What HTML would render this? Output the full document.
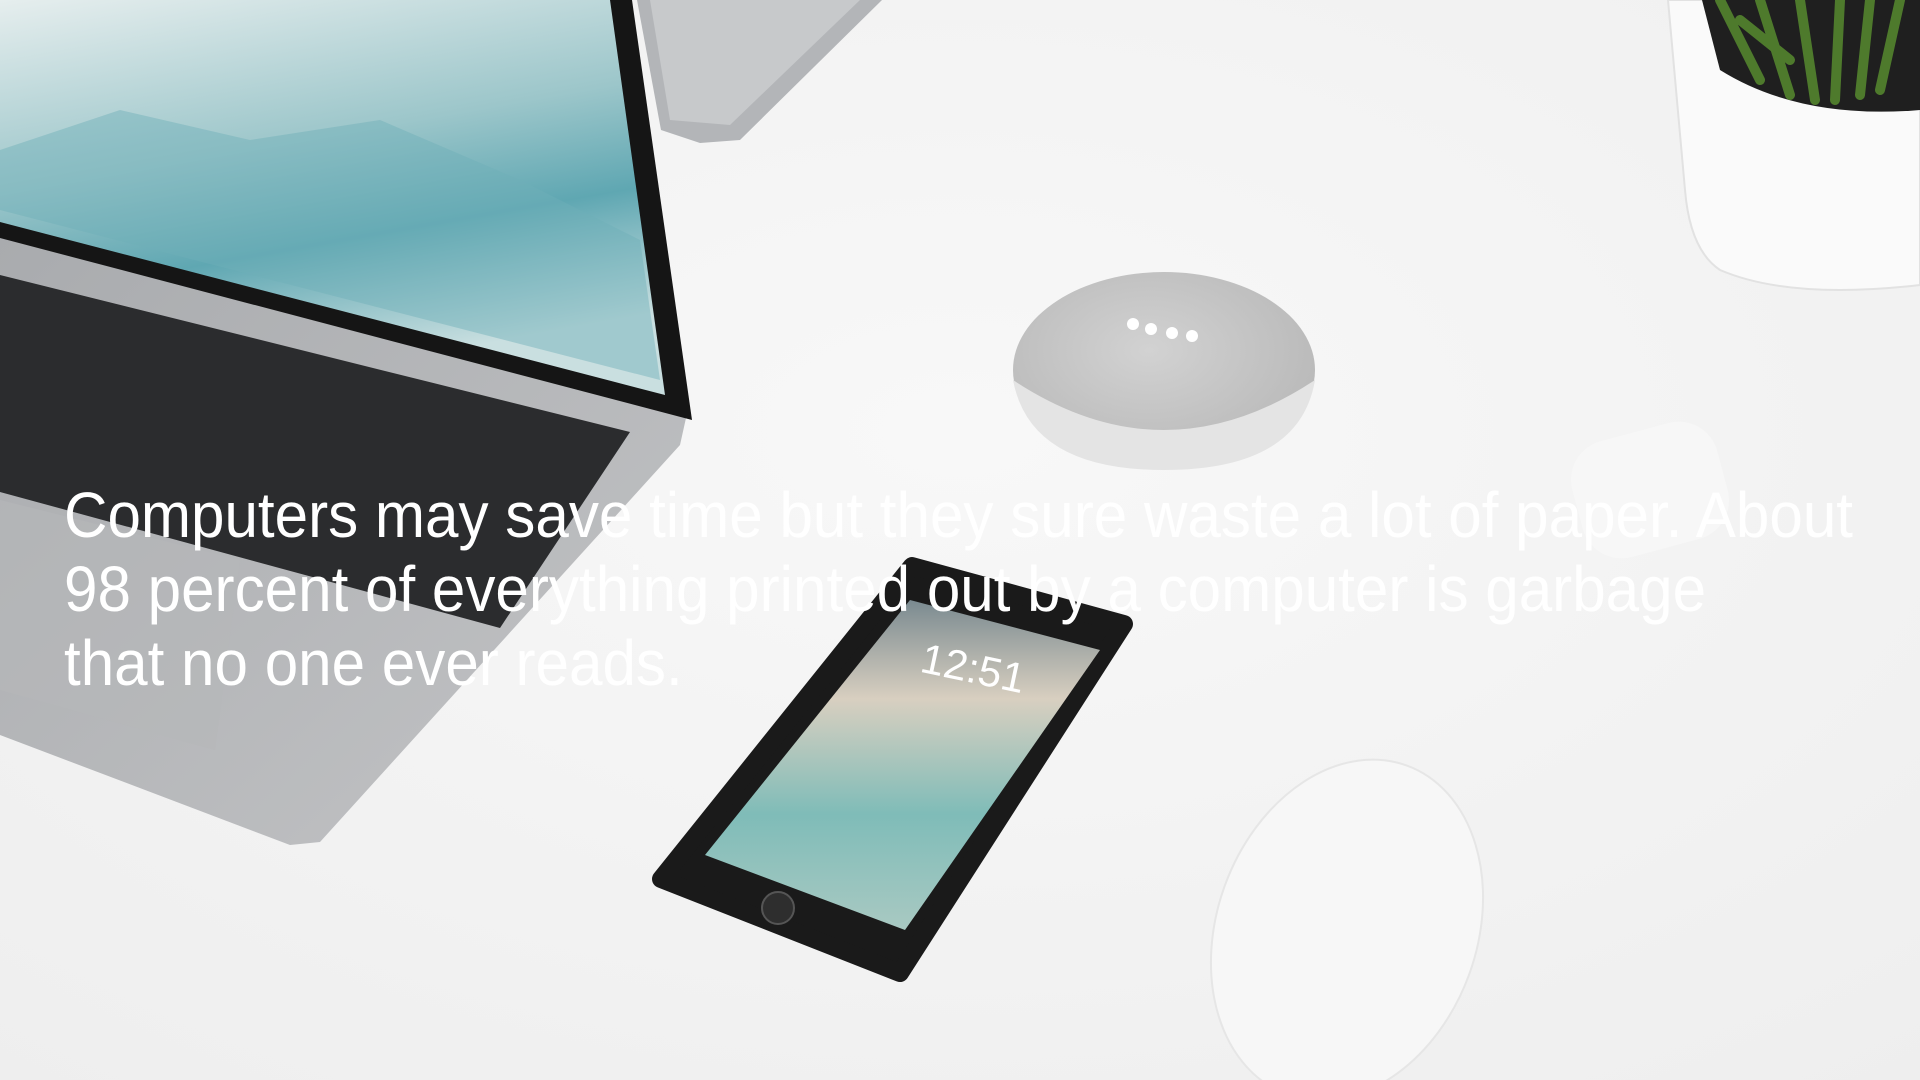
<!DOCTYPE html>
<html><head><meta charset="utf-8"><style>
html,body{margin:0;padding:0;width:1920px;height:1080px;overflow:hidden;background:#f3f3f3;}
svg{position:absolute;left:0;top:0}
.t{position:absolute;left:64px;top:478px;color:#fff;font-family:"Liberation Sans","DejaVu Sans",sans-serif;font-size:64px;line-height:74px;white-space:nowrap;transform:scaleX(0.94);transform-origin:left top;}
</style></head><body>
<svg width="1920" height="1080" viewBox="0 0 1920 1080">
<defs>
<radialGradient id="bg" cx="0.5" cy="0.4" r="0.8"><stop offset="0" stop-color="#f8f8f8"/><stop offset="1" stop-color="#eeeeee"/></radialGradient>
<linearGradient id="scr" x1="0" y1="0" x2="0.3" y2="1"><stop offset="0" stop-color="#e6eeee"/><stop offset="0.45" stop-color="#9cc6ca"/><stop offset="0.7" stop-color="#5fa7b2"/><stop offset="1" stop-color="#c9dfe0"/></linearGradient>
<linearGradient id="base" x1="0" y1="0" x2="1" y2="1"><stop offset="0" stop-color="#a9abae"/><stop offset="1" stop-color="#c3c4c6"/></linearGradient>
<linearGradient id="ph" x1="0" y1="0" x2="0" y2="1"><stop offset="0" stop-color="#7a8a90"/><stop offset="0.3" stop-color="#d8cfc0"/><stop offset="0.65" stop-color="#7fbcb8"/><stop offset="1" stop-color="#a9c9c2"/></linearGradient>
<radialGradient id="hm" cx="0.45" cy="0.4" r="0.6"><stop offset="0" stop-color="#d2d2d2"/><stop offset="1" stop-color="#b9b9b9"/></radialGradient>
</defs>
<rect width="1920" height="1080" fill="url(#bg)"/>
<polygon points="637,0 882,0 740,140 700,143 661,130" fill="#b3b5b8"/>
<polygon points="650,0 860,0 730,125 670,120" fill="#c7c9cb"/>
<polygon points="0,235 686,418 680,445 320,842 290,845 0,735" fill="url(#base)"/>
<polygon points="0,275 630,432 500,628 0,492" fill="#2b2c2e"/>
<polygon points="0,500 240,560 215,750 0,690" fill="#b6b7b9" opacity="0.6"/>
<polygon points="0,0 632,0 692,420 0,238" fill="#151515"/>
<polygon points="0,0 610,0 665,395 0,222" fill="url(#scr)"/>
<polygon points="0,150 120,110 250,140 380,120 520,180 640,240 660,380 0,210" fill="#6fb0b8" opacity="0.45"/>
<ellipse cx="1164" cy="370" rx="151" ry="98" fill="url(#hm)"/>
<path d="M1013 380 Q1164 480 1315 380 Q1300 470 1164 470 Q1030 470 1013 380Z" fill="#e4e4e4"/>
<circle cx="1133" cy="324" r="6" fill="#fff"/><circle cx="1151" cy="329" r="6" fill="#fff"/><circle cx="1172" cy="333" r="6" fill="#fff"/><circle cx="1192" cy="336" r="6" fill="#fff"/>
<path d="M1668 0 L1920 0 L1920 285 Q1790 300 1720 270 Q1690 250 1685 190 Z" fill="#fafafa" stroke="#e2e2e2" stroke-width="2"/>
<path d="M1702 0 L1920 0 L1920 110 Q1800 120 1720 70 Z" fill="#1f1f1f"/>
<path d="M1720 0 L1760 80 M1760 0 L1790 95 M1800 0 L1815 100 M1840 0 L1835 100 M1870 0 L1860 95 M1900 0 L1880 90 M1740 20 L1790 60" stroke="#4e7a2c" stroke-width="10" stroke-linecap="round"/>
<rect x="1575" y="430" width="150" height="120" rx="40" fill="#f7f7f7" transform="rotate(-15 1650 490)"/>
<polygon points="912,566 1124,624 900,973 661,879" fill="#1a1a1a" stroke="#1a1a1a" stroke-width="18" stroke-linejoin="round"/>
<polygon points="910,600 1100,650 905,930 705,855" fill="url(#ph)"/>
<circle cx="778" cy="908" r="16" fill="#2e2e2e" stroke="#555" stroke-width="2"/>
<text x="920" y="680" fill="#fff" font-family="Liberation Sans" font-size="42" transform="rotate(12 960 670)">12:51</text>
<ellipse cx="1347" cy="930" rx="130" ry="175" fill="#f7f7f7" stroke="#e6e6e6" stroke-width="2" transform="rotate(20 1347 930)"/>
</svg>
<div class="t">Computers may save time but they sure waste a lot of paper. About<br>98 percent of everything printed out by a computer is garbage<br>that no one ever reads.</div>
</body></html>
